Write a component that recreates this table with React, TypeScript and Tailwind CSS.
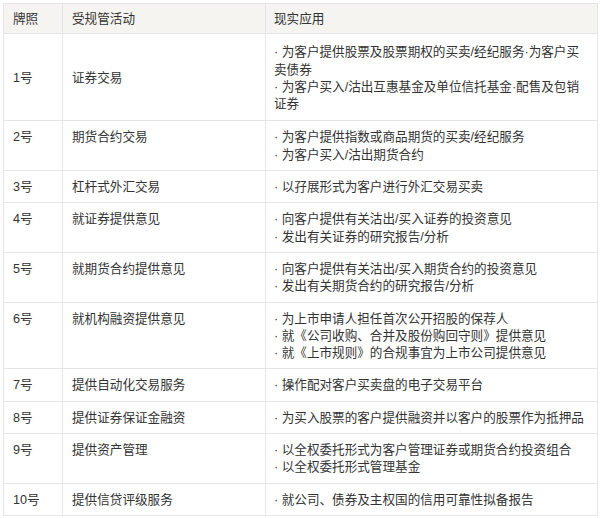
import React from 'react';

type Row = { no: string; activity: string; uses: string[]; middle?: boolean };

const rows: Row[] = [
  {
    no: '1号',
    activity: '证券交易',
    uses: ['为客户提供股票及股票期权的买卖/经纪服务·为客户买卖债券', '为客户买入/沽出互惠基金及单位信托基金·配售及包销证券'],
    middle: true,
  },
  { no: '2号', activity: '期货合约交易', uses: ['为客户提供指数或商品期货的买卖/经纪服务', '为客户买入/沽出期货合约'] },
  { no: '3号', activity: '杠杆式外汇交易', uses: ['以孖展形式为客户进行外汇交易买卖'] },
  { no: '4号', activity: '就证券提供意见', uses: ['向客户提供有关沽出/买入证券的投资意见', '发出有关证券的研究报告/分析'] },
  { no: '5号', activity: '就期货合约提供意见', uses: ['向客户提供有关沽出/买入期货合约的投资意见', '发出有关期货合约的研究报告/分析'] },
  {
    no: '6号',
    activity: '就机构融资提供意见',
    uses: ['为上市申请人担任首次公开招股的保荐人', '就《公司收购、合并及股份购回守则》提供意见', '就《上市规则》的合规事宜为上市公司提供意见'],
  },
  { no: '7号', activity: '提供自动化交易服务', uses: ['操作配对客户买卖盘的电子交易平台'] },
  { no: '8号', activity: '提供证券保证金融资', uses: ['为买入股票的客户提供融资并以客户的股票作为抵押品'] },
  { no: '9号', activity: '提供资产管理', uses: ['以全权委托形式为客户管理证券或期货合约投资组合', '以全权委托形式管理基金'] },
  { no: '10号', activity: '提供信贷评级服务', uses: ['就公司、债券及主权国的信用可靠性拟备报告'] },
];

export default function App() {
  return (
    <div className="w-[600px] h-[518px] bg-white p-[3px] text-[12.6px] leading-[17.3px] text-[#333]" style={{ fontFamily: '"Liberation Sans", "Noto Sans CJK SC", sans-serif' }}>
      <table className="w-[594px] border-collapse table-fixed">
        <colgroup>
          <col className="w-[59px]" />
          <col className="w-[203px]" />
          <col className="w-[332px]" />
        </colgroup>
        <thead>
          <tr className="bg-[#f5f4f0]">
            <th className="border border-[#e6e6e6] px-[9px] pt-[7px] pb-[5px] text-left font-normal">牌照</th>
            <th className="border border-[#e6e6e6] px-[9px] pt-[7px] pb-[5px] text-left font-normal">受规管活动</th>
            <th className="border border-[#e6e6e6] px-[8px] pt-[7px] pb-[5px] text-left font-normal">现实应用</th>
          </tr>
        </thead>
        <tbody>
          {rows.map((r) => (
            <tr key={r.no}>
              <td className={`border border-[#e6e6e6] px-[9px] ${r.middle ? 'align-middle pt-[10px] pb-[7px]' : 'align-top pt-[8px] pb-[6px]'}`}>{r.no}</td>
              <td className={`border border-[#e6e6e6] px-[9px] ${r.middle ? 'align-middle pt-[10px] pb-[7px]' : 'align-top pt-[8px] pb-[6px]'}`}>{r.activity}</td>
              <td className={`border border-[#e6e6e6] pl-[8px] pr-[7px] align-top ${r.middle ? 'pt-[10px] pb-[7px]' : 'pt-[8px] pb-[6px]'}`}>
                {r.uses.map((u) => (
                  <div key={u}>{'·\u00a0' + u}</div>
                ))}
              </td>
            </tr>
          ))}
        </tbody>
      </table>
    </div>
  );
}
